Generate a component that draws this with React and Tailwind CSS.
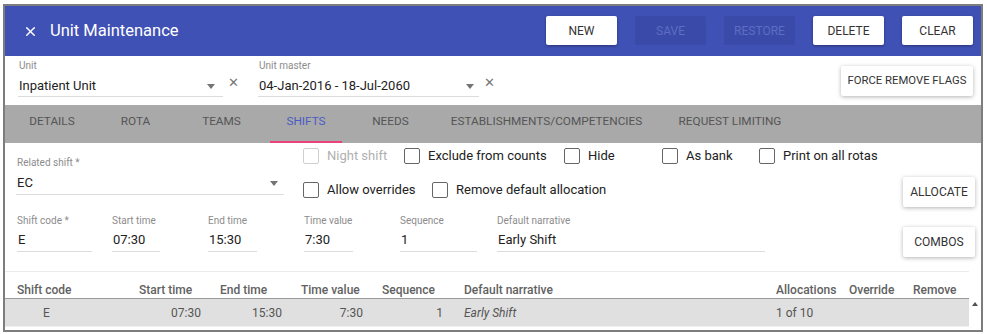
import { X } from 'lucide-react';

function Arrow() {
  return (
    <svg width="8" height="5" viewBox="0 0 8 5" className="shrink-0">
      <path d="M0 0 L8 0 L4 5 Z" fill="#757575" />
    </svg>
  );
}

function Field({ label, value, width, className = '' }) {
  return (
    <div className={`flex flex-col shrink-0 ${className}`} style={{ width }}>
      <span className="text-[10px] leading-[14px] text-[#8c8c8c] whitespace-nowrap">{label}</span>
      <span className="text-[13px] leading-[18px] text-[#222] mt-[3px] pl-[1px] whitespace-nowrap">{value}</span>
      <div className="h-px bg-[#dcdcdc] mt-[2px]" />
    </div>
  );
}

function Check({ label, width, disabled }) {
  return (
    <div className="flex items-center shrink-0" style={{ width }}>
      <span className={`w-[16px] h-[16px] rounded-[2px] border-[1.5px] ${disabled ? 'border-[#d0d0d0]' : 'border-[#666]'}`} />
      <span className={`ml-[8px] text-[13px] whitespace-nowrap ${disabled ? 'text-[#b0b0b0]' : 'text-[#222]'}`}>{label}</span>
    </div>
  );
}

function Btn({ children, className = '', small }) {
  return (
    <div className={`h-[30px] flex items-center justify-center ${small ? 'text-[11.3px]' : 'text-[12px]'} text-[#333] bg-white shadow-[0_1px_4px_rgba(0,0,0,0.3)] rounded-[2px] ${className}`}>
      {children}
    </div>
  );
}

const tabs = [
  ['DETAILS', 94], ['ROTA', 73], ['TEAMS', 99], ['SHIFTS', 70], ['NEEDS', 99],
  ['ESTABLISHMENTS/COMPETENCIES', 213], ['REQUEST LIMITING', 154],
];

export default function App() {
  return (
    <div className="w-[987px] h-[334px] bg-white pt-[4px] pl-[3px] font-['Roboto',sans-serif] overflow-hidden">
      <div className="w-[980px] h-[328px] border-2 border-[#7d7d7d] flex flex-col overflow-hidden">

        {/* Title bar */}
        <div className="h-[50px] bg-[#3f51b5] flex items-center pl-[18px] pr-[8px] shrink-0">
          <X size={15} strokeWidth={2.4} className="text-white" />
          <span className="ml-[12px] text-[16.5px] text-white">Unit Maintenance</span>
          <div className="ml-auto flex gap-[18px] mb-[1px]">
            {['NEW', 'SAVE', 'RESTORE', 'DELETE', 'CLEAR'].map(b => {
              const off = b === 'SAVE' || b === 'RESTORE';
              return (
                <div key={b}
                  className={`w-[71px] h-[29px] flex items-center justify-center text-[12px] rounded-[2px] ${off ? 'bg-[#3a4aa8] text-[#5e6cc2]' : 'bg-white text-[#333] shadow-[0_1px_3px_rgba(0,0,0,0.35)]'}`}>
                  {b}
                </div>
              );
            })}
          </div>
        </div>

        {/* Unit selectors */}
        <div className="h-[49px] flex items-start pl-[13px] pr-[8px] pt-[3px] shrink-0">
          <div className="flex items-center">
            <div className="w-[205px]">
              <span className="block text-[10px] leading-[14px] text-[#8c8c8c] pl-[1px]">Unit</span>
              <div className="flex items-center h-[20px] mt-[3px] pl-[1px] pr-[8px]">
                <span className="text-[13px] text-[#222]">Inpatient Unit</span>
                <span className="ml-auto"><Arrow /></span>
              </div>
              <div className="h-px bg-[#dcdcdc]" />
            </div>
            <span className="ml-[5px] mt-[10px] text-[#777] text-[13px]">✕</span>
          </div>
          <div className="flex items-center ml-[19px]">
            <div className="w-[221px]">
              <span className="block text-[10px] leading-[14px] text-[#8c8c8c] pl-[1px]">Unit master</span>
              <div className="flex items-center h-[20px] mt-[3px] pl-[1px] pr-[5px]">
                <span className="text-[13px] text-[#222]">04-Jan-2016 - 18-Jul-2060</span>
                <span className="ml-auto"><Arrow /></span>
              </div>
              <div className="h-px bg-[#dcdcdc]" />
            </div>
            <span className="ml-[5px] mt-[10px] text-[#777] text-[13px]">✕</span>
          </div>
          <Btn small className="ml-auto mt-[7px] w-[132px]">FORCE REMOVE FLAGS</Btn>
        </div>

        {/* Tabs */}
        <div className="h-[38px] bg-[#a9a9a9] flex shrink-0">
          {tabs.map(([t, w]) => {
            const on = t === 'SHIFTS';
            return (
              <div key={t} className="flex flex-col items-center justify-end shrink-0" style={{ width: w }}>
                <span className={`text-[11.8px] mb-[10px] whitespace-nowrap ${on ? 'text-[#4a5cc4]' : 'text-[#555]'}`}>{t}</span>
                <div className={`w-[72px] h-[2px] shrink-0 ${on ? 'bg-[#e8437a]' : ''}`} />
              </div>
            );
          })}
        </div>

        {/* Related shift + flags */}
        <div className="h-[71px] flex pl-[11px] pr-[6px] shrink-0">
          <div className="w-[268px] pt-[13px]">
            <span className="block text-[10px] leading-[14px] text-[#8c8c8c] pl-[1px]">Related shift *</span>
            <div className="flex items-center h-[22px] mt-[2px] pl-[1px] pr-[6px]">
              <span className="text-[13px] text-[#222]">EC</span>
              <span className="ml-auto"><Arrow /></span>
            </div>
            <div className="h-px bg-[#dcdcdc]" />
          </div>
          <div className="ml-[19px] pt-[3px] flex flex-col gap-[14px]">
            <div className="flex h-[20px] items-center">
              <Check label="Night shift" width={101} disabled />
              <Check label="Exclude from counts" width={160} />
              <Check label="Hide" width={98} />
              <Check label="As bank" width={97} />
              <Check label="Print on all rotas" />
            </div>
            <div className="flex h-[20px] items-center">
              <Check label="Allow overrides" width={129} />
              <Check label="Remove default allocation" />
            </div>
          </div>
          <div className="ml-auto pt-[34px]">
            <Btn className="w-[72px]">ALLOCATE</Btn>
          </div>
        </div>

        {/* Shift fields */}
        <div className="flex pl-[12px] pr-[6px] h-[38px] shrink-0">
          <Field label="Shift code *" value="E" width={75} />
          <Field label="Start time" value="07:30" width={48} className="ml-[20px]" />
          <Field label="End time" value="15:30" width={49} className="ml-[48px]" />
          <Field label="Time value" value="7:30" width={49} className="ml-[47px]" />
          <Field label="Sequence" value="1" width={77} className="ml-[47px]" />
          <Field label="Default narrative" value="Early Shift" width={268} className="ml-[20px]" />
          <div className="ml-auto pt-[13px]">
            <Btn className="w-[72px] h-[29px]">COMBOS</Btn>
          </div>
        </div>

        <div className="h-px bg-[#ececec] mt-[19px] mr-[12px] shrink-0" />

        {/* Table */}
        <div className="flex h-[27px] pt-[9px] items-center border-b border-[#9a9a9a] mr-[12px] text-[12px] font-medium text-[#616161] shrink-0">
          <div className="w-[126px] pl-[12px]">Shift code</div>
          <div className="w-[81px] pl-[8px]">Start time</div>
          <div className="w-[81px] pl-[8px]">End time</div>
          <div className="w-[81px] pl-[8px]">Time value</div>
          <div className="w-[82px] pl-[8px]">Sequence</div>
          <div className="w-[312px] pl-[8px]">Default narrative</div>
          <div className="w-[73px] pl-[8px]">Allocations</div>
          <div className="w-[64px] pl-[8px]">Override</div>
          <div className="w-[64px] pl-[8px]">Remove</div>
        </div>
        <div className="flex shrink-0">
          <div className="flex-1 flex h-[28px] items-center bg-[#e0e0e0] text-[12px] text-[#555] border-b border-[#f0f0f0]">
            <div className="w-[126px] pl-[38px]">E</div>
            <div className="w-[81px] text-right pr-[11px]">07:30</div>
            <div className="w-[81px] text-right pr-[11px]">15:30</div>
            <div className="w-[81px] text-right pr-[11px]">7:30</div>
            <div className="w-[82px] text-right pr-[13px]">1</div>
            <div className="w-[312px] pl-[8px] italic">Early Shift</div>
            <div className="w-[73px] pl-[8px]">1 of 10</div>
          </div>
          <div className="w-[12px] flex justify-center pt-[3px]">
            <svg width="6" height="4" viewBox="0 0 6 4"><path d="M0 4 L6 4 L3 0 Z" fill="#505050" /></svg>
          </div>
        </div>
      </div>
    </div>
  );
}
